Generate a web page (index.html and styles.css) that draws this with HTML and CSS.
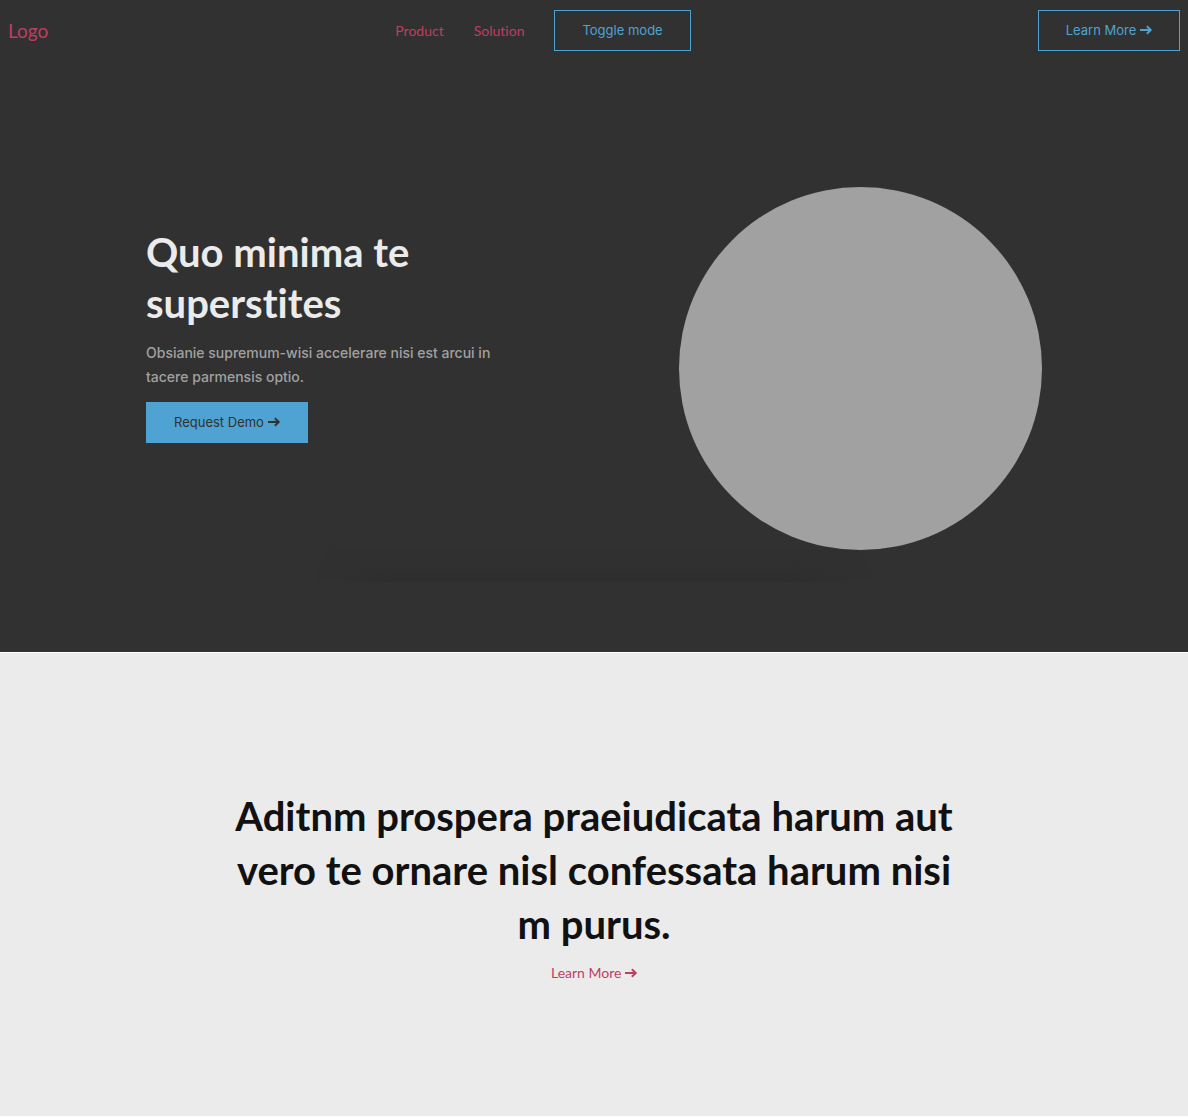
FILE: index.html
```html
<!DOCTYPE html>
<html lang="en">
<head>
<meta charset="utf-8">
<meta name="viewport" content="width=device-width, initial-scale=1">
<title>Logo</title>
<link rel="stylesheet" href="styles.css">
</head>
<body>
<svg class="sprite" aria-hidden="true">
  <symbol id="arrow" viewBox="0 0 12 10"><path d="M0 5h10.6M6.8 1.2 10.8 5 6.8 8.8" fill="none" stroke="currentColor" stroke-width="1.9" stroke-linejoin="round"/></symbol>
</svg>
<div class="top">
  <header class="bar">
    <a class="logo" href="#">Logo</a>
    <nav class="nav">
      <a class="link" href="#product">Product</a>
      <a class="link" href="#solution">Solution</a>
      <button class="button" type="button">Toggle mode</button>
    </nav>
    <button class="button" type="button">Learn More <svg class="arrow" aria-hidden="true"><use href="#arrow"/></svg></button>
  </header>
  <main class="hero">
    <div class="intro">
      <h1 class="title">Quo minima te superstites</h1>
      <p class="lead">Obsianie supremum-wisi accelerare nisi est arcui in tacere parmensis optio.</p>
      <button class="button filled" type="button">Request Demo <svg class="arrow" aria-hidden="true"><use href="#arrow"/></svg></button>
    </div>
    <div class="disc"></div>
  </main>
  <div class="shade"></div>
</div>
<section class="statement">
  <h2 class="headline">Aditnm prospera praeiudicata harum aut vero te ornare nisl confessata harum nisi m purus.</h2>
  <a class="link" href="#more">Learn More <svg class="arrow" aria-hidden="true"><use href="#arrow"/></svg></a>
</section>
</body>
</html>
```
FILE: styles.css
```css
* { box-sizing: border-box; }
body {
  margin: 0;
  background: #fff;
  font-family: Inter, "Liberation Sans", sans-serif;
  font-size: 14px;
  font-variant-ligatures: none;
}
.sprite { position: absolute; width: 0; height: 0; }
.arrow { width: 12px; height: 10px; }
.top { background: #313131; padding-bottom: 70px; }
.bar {
  display: flex;
  align-items: center;
  justify-content: space-between;
  padding: 10px 8px;
}
.nav { display: flex; align-items: center; gap: 30px; }
.logo, .link {
  color: #c03d62;
  font-family: Lato, sans-serif;
  text-decoration: none;
}
.logo { font-size: 19px; line-height: 20px; }
.link { font-size: 14px; line-height: 20px; }
.button {
  border: 1px solid #4fa3d3;
  border-radius: 0;
  background: transparent;
  color: #4fa3d3;
  font-family: Inter, sans-serif;
  font-size: 13px;
  line-height: 17px;
  padding: 11px 27px;
  white-space: nowrap;
}
.filled { background: #4fa3d3; color: #313131; }
.hero {
  display: grid;
  grid-template-columns: 1fr 1fr;
  gap: 170px;
  align-items: center;
  max-width: 896px;
  margin: 0 auto;
  padding: 126px 0 0;
}
.intro { padding-bottom: 68px; }
.title {
  margin: 0 0 12px;
  color: #ebebeb;
  font: 700 40px/51px Lato, sans-serif;
  font-variant-ligatures: none;
}
.lead {
  margin: 0 0 13px;
  color: #a1a1a1;
  font-size: 14px;
  font-weight: 500;
  line-height: 24px;
}
.disc { aspect-ratio: 1; border-radius: 50%; background: #a1a1a1; }
.shade {
  height: 32px;
  overflow: hidden;
}
.shade::before {
  content: "";
  display: block;
  width: 40%;
  height: 20px;
  margin: 32px auto 0;
  box-shadow: 0 0 36px #2a2a2a;
}
.statement {
  display: flex;
  flex-direction: column;
  align-items: center;
  gap: 12px;
  margin: 1px 0;
  padding: 136px 24px 133px;
  background: #ebebeb;
}
.headline {
  max-width: 720px;
  margin: 0;
  color: #111;
  font: 700 40px/54px Lato, sans-serif;
  font-variant-ligatures: none;
  text-align: center;
}
@media (max-width: 900px) {
  .hero { gap: 40px; padding: 60px 24px 0; }
}
```
